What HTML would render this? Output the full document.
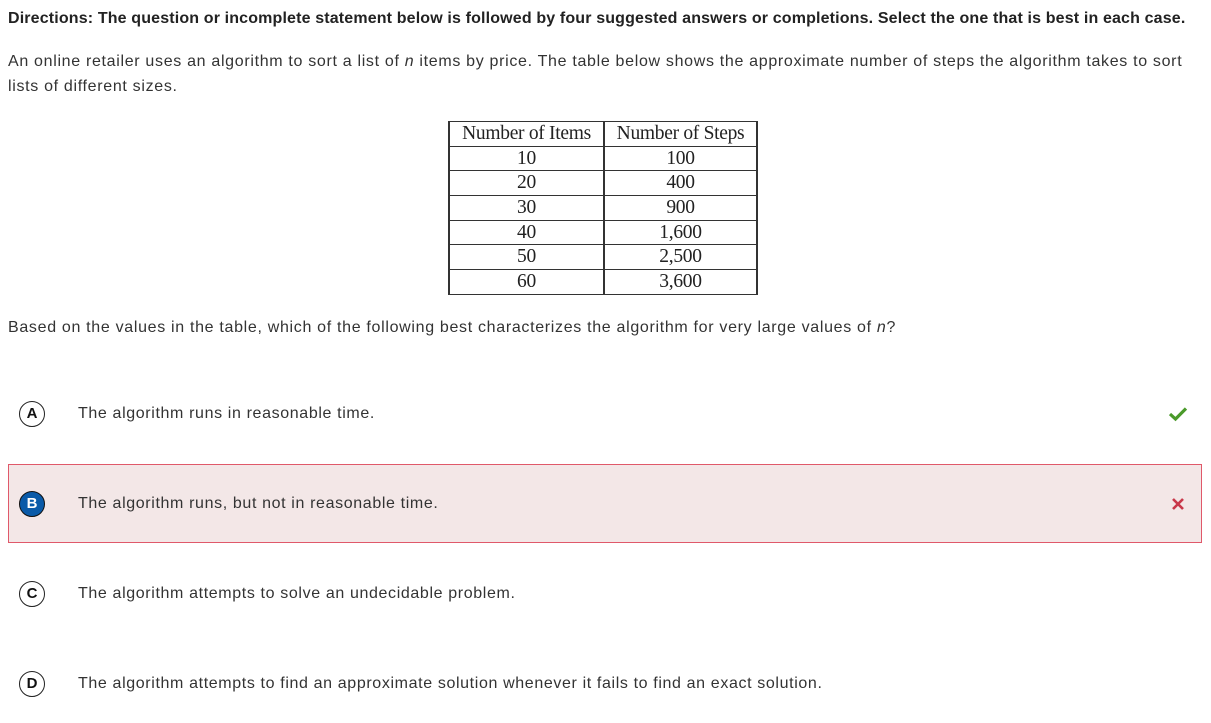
<!DOCTYPE html>
<html><head><meta charset="utf-8"><style>
body{margin:0;background:#fff;width:1211px;height:714px;overflow:hidden;font-family:"Liberation Sans",sans-serif;color:#333;position:relative}
.abs{position:absolute}
.dir{left:8px;top:10px;font-size:16px;font-weight:bold;color:#222;letter-spacing:0.15px;white-space:nowrap}
.p{left:8px;font-size:16px;color:#333;line-height:25px;letter-spacing:0.68px;white-space:nowrap}
table{position:absolute;left:448px;top:121px;border-collapse:collapse;font-family:"Liberation Serif",serif;font-size:19.5px;color:#222;letter-spacing:-0.3px}
td{border:2px solid #333;padding:0;height:23.7px;line-height:22px;text-align:center;border-top-width:1.5px;border-bottom-width:1.5px}
td.a{width:153px}td.b{width:151px}
.opt{left:8px;width:1194px;height:79px}
.opt.sel{background:#f3e7e7;border:1px solid #e0596a;box-sizing:border-box}
.c{position:absolute;left:19px;width:24px;height:24px;border:1.5px solid #222;border-radius:50%;font-weight:bold;font-size:15px;text-align:center;line-height:24px;color:#111;box-sizing:content-box}
.c.b{background:#0a5aa8;color:#fff;border-color:#111}
.t{position:absolute;left:78px;font-size:16px;color:#333;letter-spacing:0.63px;white-space:nowrap}
</style></head><body>
<div class="abs dir">Directions: The question or incomplete statement below is followed by four suggested answers or completions. Select the one that is best in each case.</div>
<div class="abs p" style="top:49px">An online retailer uses an algorithm to sort a list of <i>n</i> items by price. The table below shows the approximate number of steps the algorithm takes to sort<br>lists of different sizes.</div>
<table>
<tr><td class="a">Number of Items</td><td class="b">Number of Steps</td></tr>
<tr><td>10</td><td>100</td></tr>
<tr><td>20</td><td>400</td></tr>
<tr><td>30</td><td>900</td></tr>
<tr><td>40</td><td>1,600</td></tr>
<tr><td>50</td><td>2,500</td></tr>
<tr><td>60</td><td>3,600</td></tr>
</table>
<div class="abs p" style="top:315px">Based on the values in the table, which of the following best characterizes the algorithm for very large values of <i>n</i>?</div>

<div class="abs opt" style="top:374px"><div class="c" style="top:27px;left:11px">A</div><div class="t" style="left:70px;top:31px">The algorithm runs in reasonable time.</div>
<svg class="abs" style="left:1160px;top:32px" width="20" height="16" viewBox="0 0 20 16"><path d="M2 8 L7.5 13 L18 2.5" fill="none" stroke="#4a9a2a" stroke-width="3.2"/></svg></div>

<div class="abs opt sel" style="top:464px"><div class="c b" style="top:26px;left:10px">B</div><div class="t" style="left:69px;top:30px">The algorithm runs, but not in reasonable time.</div>
<svg class="abs" style="left:1162px;top:32px" width="14" height="14" viewBox="0 0 14 14"><path d="M2 2 L12 12 M12 2 L2 12" stroke="#c8384a" stroke-width="2.6"/></svg></div>

<div class="abs opt" style="top:554px"><div class="c" style="top:27px;left:11px">C</div><div class="t" style="left:70px;top:31px">The algorithm attempts to solve an undecidable problem.</div></div>

<div class="abs opt" style="top:644px"><div class="c" style="top:27px;left:11px">D</div><div class="t" style="left:70px;top:31px">The algorithm attempts to find an approximate solution whenever it fails to find an exact solution.</div></div>
</body></html>
